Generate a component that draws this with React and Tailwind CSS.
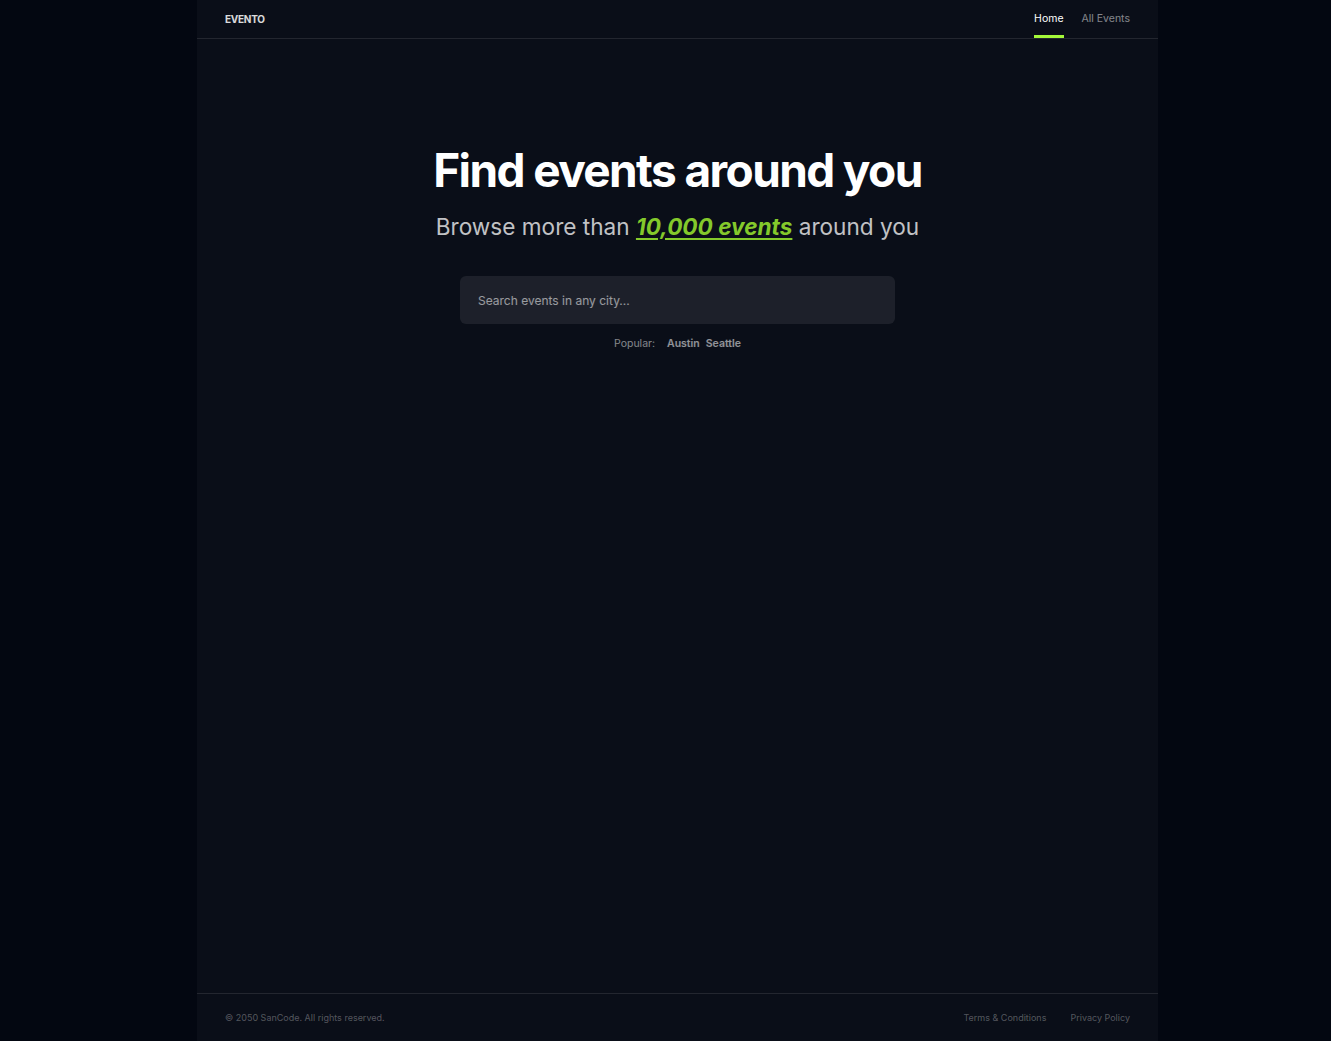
export default function App() {
  return (
    <div className="min-h-screen bg-[#030711] font-['Inter',sans-serif] text-white">
      <div className="ml-[197px] flex min-h-screen w-[961px] flex-col bg-[#0a0e18]">
        {/* header */}
        <header className="flex h-[39px] items-center justify-between border-b border-white/10 px-[28px]">
          <span className="text-[10px] font-bold tracking-tight text-white/85">EVENTO</span>
          <nav className="flex h-full items-center gap-[18px] text-[10.5px]">
            <a className="relative flex h-full items-center text-white">
              Home
              <span className="absolute bottom-0 left-0 h-[3px] w-full bg-[#a4f839]" />
            </a>
            <a className="flex h-full items-center text-white/50">All Events</a>
          </nav>
        </header>

        {/* hero */}
        <main className="flex flex-1 flex-col items-center pt-[108px]">
          <h1 className="text-[46px] font-bold leading-none tracking-[-0.035em]">Find events around you</h1>
          <p className="mt-[17px] text-[22.6px] text-white/75">
            Browse more than{' '}
            <span className="font-bold italic text-[#84c92b] underline underline-offset-[3px]">10,000 events</span>{' '}
            around you
          </p>
          <div className="mt-[32px] flex h-[48px] w-[435px] items-center rounded-md bg-white/[0.08] px-[18px] pt-[2px] text-[12px] text-white/55">
            Search events in any city...
          </div>
          <div className="mt-[12px] flex items-center gap-[12px] text-[10.5px] text-white/50">
            <span>Popular:</span>
            <span className="flex gap-[6px] font-semibold text-white/55">
              <span>Austin</span>
              <span>Seattle</span>
            </span>
          </div>
        </main>

        {/* footer */}
        <footer className="flex h-[48px] items-center justify-between border-t border-white/10 px-[28px] text-[9px] text-white/30">
          <span>© 2050 SanCode. All rights reserved.</span>
          <div className="flex gap-[24px]">
            <a>Terms &amp; Conditions</a>
            <a>Privacy Policy</a>
          </div>
        </footer>
      </div>
    </div>
  );
}
